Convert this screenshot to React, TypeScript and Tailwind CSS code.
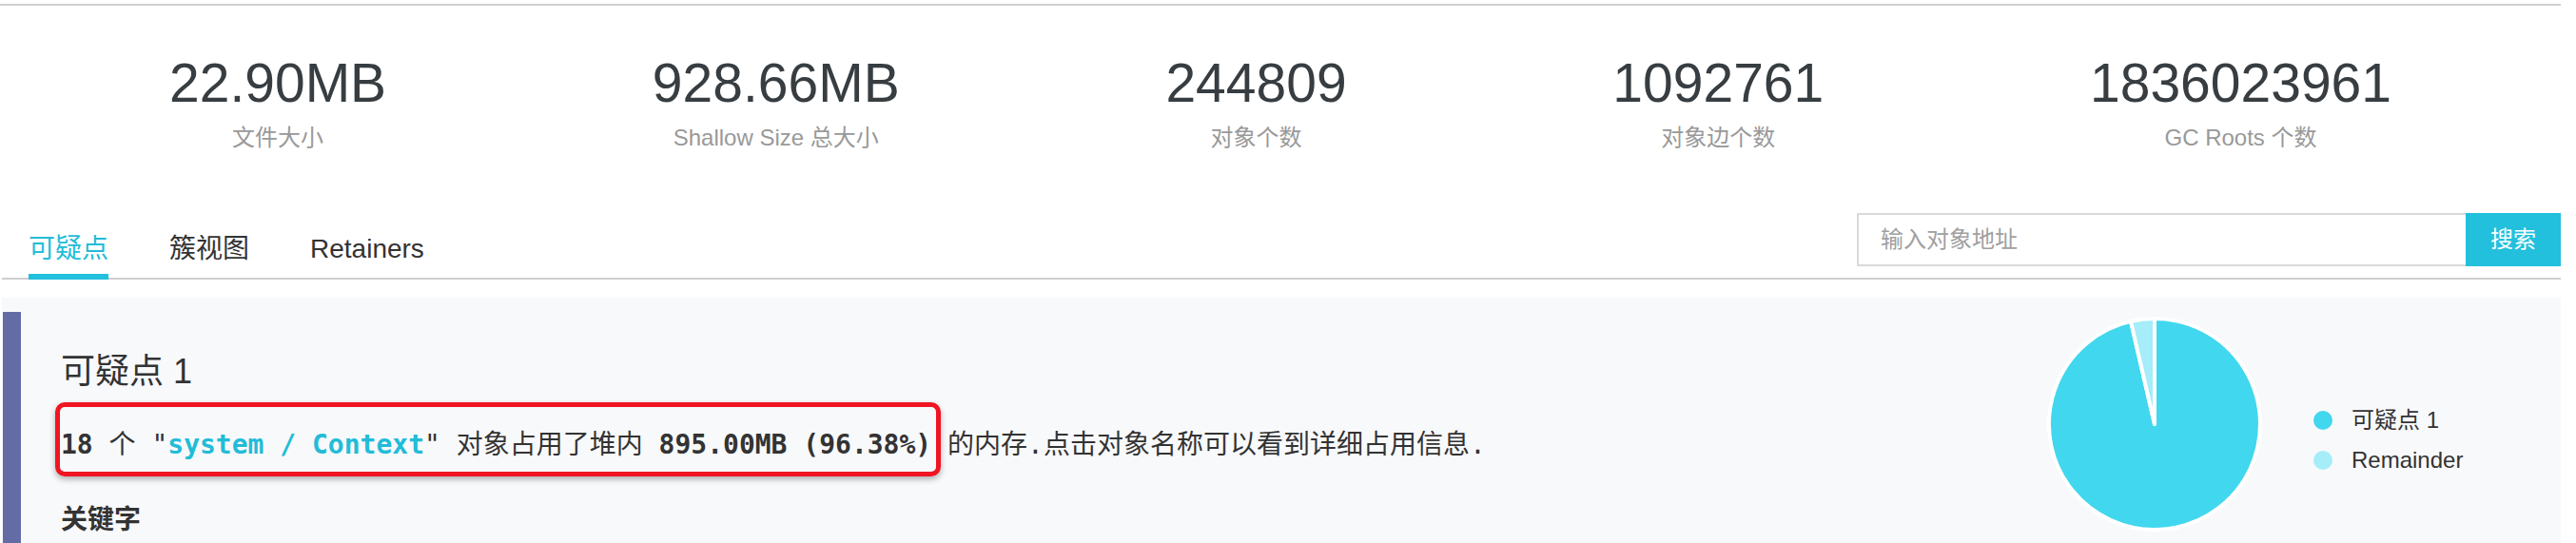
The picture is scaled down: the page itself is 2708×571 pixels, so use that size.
const stats = [
  { value: '22.90MB', label: '文件大小' },
  { value: '928.66MB', label: 'Shallow Size 总大小' },
  { value: '244809', label: '对象个数' },
  { value: '1092761', label: '对象边个数' },
  { value: '1836023961', label: 'GC Roots 个数' }
]

const tabs = ['可疑点', '簇视图', 'Retainers']

// pie: 96.38% suspect, rest remainder, drawn clockwise from 12 o'clock
function Pie() {
  return (
    <svg width="226" height="226" viewBox="0 0 226 226" className="mt-[5px] shrink-0">
      <path d="M113 113 L113 2 A111 111 0 1 1 87.98 4.85 Z" fill="#41d7ef" stroke="#fff" strokeWidth="4" strokeLinejoin="round" />
      <path d="M113 113 L87.98 4.85 A111 111 0 0 1 113 2 Z" fill="#a4edf9" stroke="#fff" strokeWidth="4" strokeLinejoin="round" />
    </svg>
  )
}

export default function App() {
  return (
    <div className="w-[2692px] bg-white font-['Liberation_Sans','Noto_Sans_CJK_SC',sans-serif] text-[#333]">
      <div className="mt-[4px] h-[2px] bg-[#d0d0d0]" />

      <div className="flex justify-between px-[178px] pt-[53px]">
        {stats.map((stat) => (
          <div key={stat.label} className="flex flex-col items-center">
            <div className="text-[57px] leading-[56px] text-[#373d41]">{stat.value}</div>
            <div className="mt-[18px] text-[24px] leading-[24px] text-[#999]">{stat.label}</div>
          </div>
        ))}
      </div>

      <div className="ml-[2px] flex h-[137px] items-end justify-between border-b-2 border-[#cfcfcf]">
        <div className="mb-[-2px] ml-[28px] flex gap-[64px]">
          {tabs.map((tab, i) => (
            <div
              key={tab}
              className={
                i === 0
                  ? 'border-b-[6px] border-[#22c0dd] pb-[12px] text-[28px] leading-[28px] text-[#22bcd8]'
                  : 'border-b-[6px] border-transparent pb-[12px] text-[28px] leading-[28px] text-[#333]'
              }
            >
              {tab}
            </div>
          ))}
        </div>

        <div className="mb-[12px] flex h-[56px]">
          <input
            placeholder="输入对象地址"
            className="w-[640px] border-2 border-r-0 border-[#d9d9d9] bg-white pl-[23px] text-[24px] outline-none placeholder:text-[#a0a0a0]"
          />
          <button className="w-[100px] bg-[#22c0dd] text-[24px] text-white">搜索</button>
        </div>
      </div>

      <div className="ml-[2px] mt-[19px] flex bg-[#f8f9fb] pt-[15px]">
        <div className="ml-[1px] w-[19px] shrink-0 bg-[#646ca6]" />

        <div className="flex-1 pb-[40px] pl-[42px]">
          <div className="mt-[45px] text-[36px] leading-[36px]">可疑点 1</div>
          <p className="mt-[45px] whitespace-nowrap font-['DejaVu_Sans_Mono','Noto_Sans_CJK_SC',monospace] text-[28px] leading-[28px] text-[#333]">
            <span className="relative inline-block">
              <b>18</b> 个 "<b className="text-[#22bcd8]">system / Context</b>" 对象占用了堆内 <b>895.00MB (96.38%)</b>
              <span className="absolute -bottom-[19px] -left-[6px] -right-[10px] -top-[31px] rounded-[10px] border-[5px] border-[#f01522] shadow-[0_3px_6px_rgba(0,0,0,0.3)]" />
            </span>{' '}
            的内存.点击对象名称可以看到详细占用信息.
          </p>
          <div className="mt-[51px] text-[28px] font-bold leading-[28px]">关键字</div>
        </div>

        <div className="flex shrink-0 pr-[100px]">
          <Pie />
          <div className="ml-[54px] mt-[102px] flex w-[160px] flex-col gap-[18px] self-start">
            <div className="flex h-[24px] items-center gap-[20px] text-[24px] leading-[24px]">
              <span className="h-[20px] w-[20px] rounded-full bg-[#41d7ef]" />
              可疑点 1
            </div>
            <div className="flex h-[24px] items-center gap-[20px] text-[24px] leading-[24px]">
              <span className="h-[20px] w-[20px] rounded-full bg-[#a4edf9]" />
              Remainder
            </div>
          </div>
        </div>
      </div>
    </div>
  )
}
